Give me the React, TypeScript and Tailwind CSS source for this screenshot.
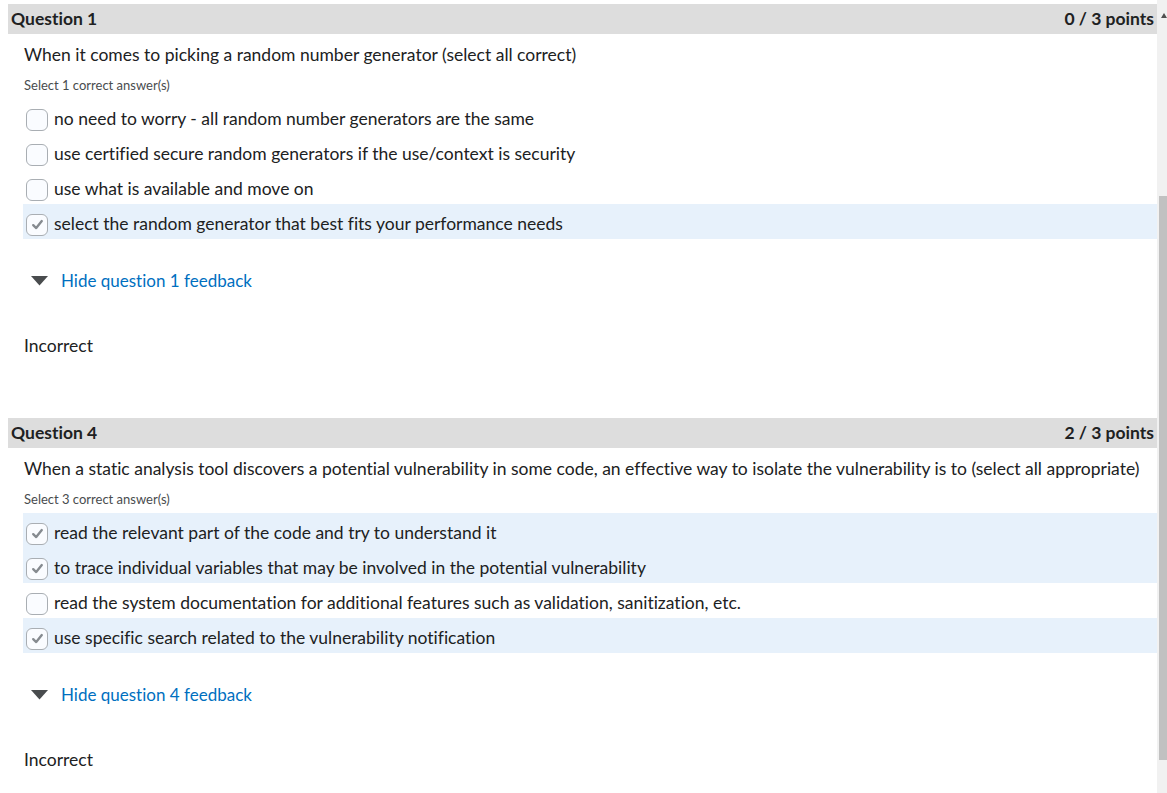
import React from "react";

type Choice = { text: string; checked: boolean };

interface QuestionProps {
  num: number;
  points: string;
  prompt: string;
  hint: string;
  choices: Choice[];
}

const CheckBox = ({ checked }: { checked: boolean }) => (
  <div className="w-[22px] h-[22px] shrink-0 rounded-[6px] border border-[#a9aeb3] bg-[#fafcff] flex items-center justify-center">
    {checked && (
      <svg width="15" height="15" viewBox="0 0 14 14" fill="none">
        <path
          d="M3 7.6 L5.8 10.3 L11 3.8"
          stroke="#868b90"
          strokeWidth="2.2"
          strokeLinecap="round"
          strokeLinejoin="round"
        />
      </svg>
    )}
  </div>
);

const Question: React.FC<QuestionProps> = ({ num, points, prompt, hint, choices }) => (
  <section>
    {/* Bandeau titre */}
    <div className="h-[30px] bg-[#dddddd] flex items-center justify-between pl-[3px] pr-[3px] text-[17.5px] font-bold text-[#202122]">
      <span>Question {num}</span>
      <span>{points}</span>
    </div>

    <div className="pl-[15px]">
      <p className="mt-[9px] text-[17.5px] leading-[24px] text-[#202122] pl-[1px]">{prompt}</p>
      <p className="mt-[9px] text-[13px] leading-[18px] text-[#494c4e] pl-[1px]">{hint}</p>

      <div className="mt-[5px]">
        {choices.map((c) => (
          <div
            key={c.text}
            className={`h-[35px] flex items-center gap-[6px] pl-[3px] pt-[6px] ${c.checked ? "bg-[#e7f1fb]" : ""}`}
          >
            <CheckBox checked={c.checked} />
            <span className="text-[17.5px] text-[#202122]">{c.text}</span>
          </div>
        ))}
      </div>

      {/* Lien feedback */}
      <div className="mt-[30px] h-[24px] flex items-center pl-[8px]">
        <svg width="17" height="10" viewBox="0 0 17 10">
          <path d="M0 0 H17 L8.5 9.5 Z" fill="#494c4e" />
        </svg>
        <span className="ml-[13px] text-[17px] text-[#006fbf]">Hide question {num} feedback</span>
      </div>

      <p className="mt-[41px] h-[24px] leading-[24px] text-[17.5px] text-[#202122] pl-[1px]">Incorrect</p>
    </div>
  </section>
);

export default function App() {
  return (
    <div
      className="w-[1167px] h-[793px] overflow-hidden bg-white flex [font-variant-ligatures:none]"
      style={{ fontFamily: "Lato, 'Noto Sans', sans-serif" }}
    >
      <main className="flex-1 pl-[8px] pt-[4px]">
        <Question
          num={1}
          points="0 / 3 points"
          prompt="When it comes to picking a random number generator (select all correct)"
          hint="Select 1 correct answer(s)"
          choices={[
            { text: "no need to worry - all random number generators are the same", checked: false },
            { text: "use certified secure random generators if the use/context is security", checked: false },
            { text: "use what is available and move on", checked: false },
            { text: "select the random generator that best fits your performance needs", checked: true },
          ]}
        />
        <div className="h-[60px]" />
        <Question
          num={4}
          points="2 / 3 points"
          prompt="When a static analysis tool discovers a potential vulnerability in some code, an effective way to isolate the vulnerability is to (select all appropriate)"
          hint="Select 3 correct answer(s)"
          choices={[
            { text: "read the relevant part of the code and try to understand it", checked: true },
            { text: "to trace individual variables that may be involved in the potential vulnerability", checked: true },
            { text: "read the system documentation for additional features such as validation, sanitization, etc.", checked: false },
            { text: "use specific search related to the vulnerability notification", checked: true },
          ]}
        />
      </main>

      {/* Barre de défilement */}
      <div className="w-[10px] h-full bg-[#f1f1f1] flex flex-col">
        <div className="h-[34px] flex items-start pt-[13px] pl-[4px]">
          <svg width="6" height="5" viewBox="0 0 6 5">
            <path d="M3 0 L6 5 H0 Z" fill="#505050" />
          </svg>
        </div>
        <div className="mt-[162px] ml-[2px] h-[564px] bg-[#c1c1c1]" />
      </div>
    </div>
  );
}
